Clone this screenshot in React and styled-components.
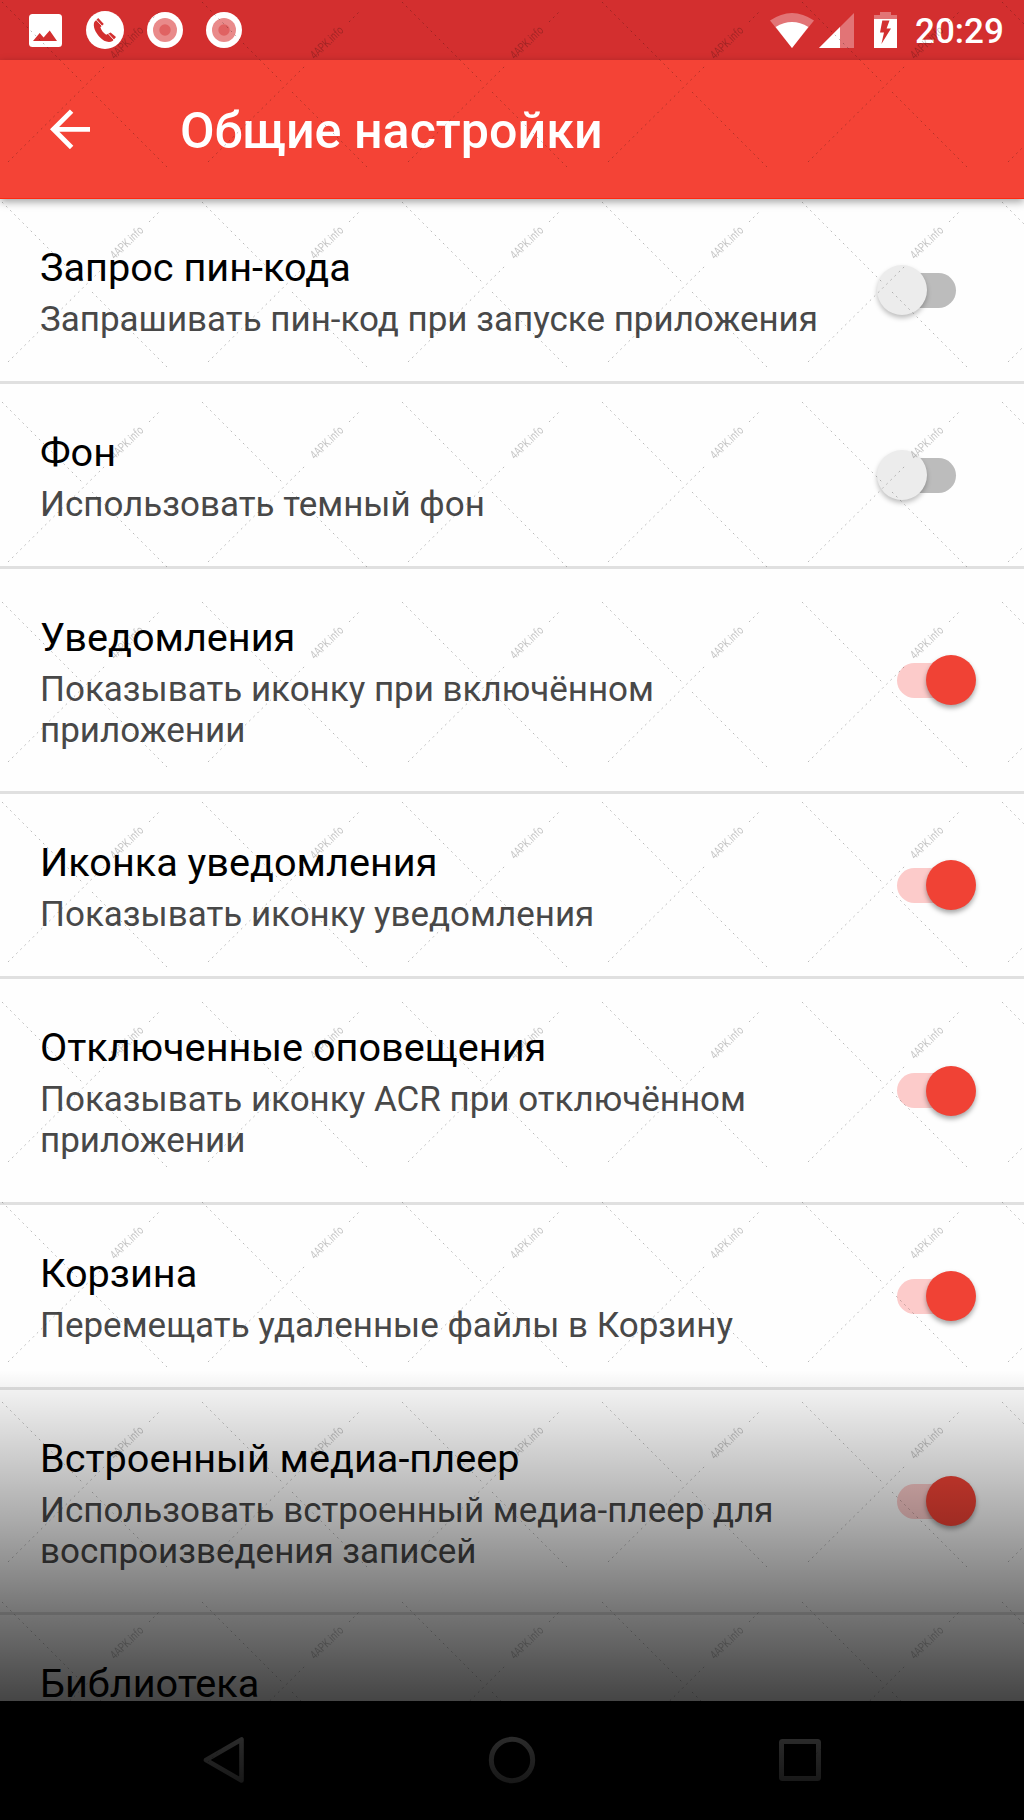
import React, { Component } from 'react'
import styled, { createGlobalStyle } from 'styled-components';

const items = [
    { title: 'Запрос пин-кода', text: 'Запрашивать пин-код при запуске приложения', on: false, height: 185 },
    { title: 'Фон', text: 'Использовать темный фон', on: false, height: 185 },
    { title: 'Уведомления', text: 'Показывать иконку при включённом приложении', on: true, height: 225 },
    { title: 'Иконка уведомления', text: 'Показывать иконку уведомления', on: true, height: 185 },
    { title: 'Отключенные оповещения', text: 'Показывать иконку ACR при отключённом приложении', on: true, height: 226 },
    { title: 'Корзина', text: 'Перемещать удаленные файлы в Корзину', on: true, height: 185 },
    { title: 'Встроенный медиа-плеер', text: 'Использовать встроенный медиа-плеер для воспроизведения записей', on: true, height: 225 },
    { title: 'Библиотека', on: null, height: 86 },
]

const PictureIcon = () => (
    <svg width="33" height="33" viewBox="0 0 33 33">
        <rect width="33" height="33" rx="3.5" fill="#fff" />
        <path d="M4 27 L10.7 19 L14.6 23.6 L20.7 16.6 L28 27 Z" fill="#d32f2f" />
    </svg>
)

const PhoneIcon = () => (
    <svg width="38" height="38" viewBox="0 0 38 38">
        <circle cx="19" cy="19" r="19" fill="#fff" />
        <path d="M8.3 11 L12.2 7 L17.8 13 L14.4 16.2 C15 19 17.6 22 20.2 23.8 L24.6 21.4 L30 26 L26.6 30 C22.6 32.2 17.6 30.4 13.6 26 C9.4 21.4 6.6 15.4 8.3 11 Z" fill="#d32f2f" />
        <path d="M10 8.6 L16.2 15.2 M22 22.4 L28 29" stroke="#fff" strokeWidth="0.9" />
    </svg>
)

const RecordIcon = () => (
    <svg width="36" height="36" viewBox="0 0 36 36">
        <circle cx="18" cy="18" r="18" fill="#fff" />
        <circle cx="18" cy="18" r="12" fill="#e98a8a" />
        <circle cx="18" cy="18" r="5.7" fill="#e06262" />
    </svg>
)

const WifiIcon = () => (
    <svg width="44" height="35" viewBox="0 0 44 35">
        <path d="M0 7.6 Q22 -7.6 44 7.6 L22 35 Z" fill="#e27476" />
        <path d="M5.6 14 Q22 4 38.4 14 L22 35 Z" fill="#fff" />
    </svg>
)

const SignalIcon = () => (
    <svg width="35" height="35" viewBox="0 0 35 35">
        <path d="M35 0 V35 H0 Z" fill="#e27476" />
        <path d="M21 14 V35 H0 Z" fill="#fff" />
    </svg>
)

const BatteryIcon = () => (
    <svg width="23" height="36" viewBox="0 0 23 36">
        <path d="M0 3 H6 V0 H17 V3 H23 V8 H0 Z" fill="#e27476" />
        <path d="M0 7 H23 V36 H0 Z" fill="#fff" />
        <path d="M8.3 8.5 H15.5 L12.6 16.5 H17 L7.4 32 L10 20.5 H6 Z" fill="#d32f2f" />
    </svg>
)

const BackArrow = () => (
    <svg width="40" height="40" viewBox="0 0 40 40" fill="none" stroke="#fff" strokeWidth="4.8">
        <path d="M3 20.3 H40 M21.6 2.1 L3.4 20.3 L21.6 38.5" />
    </svg>
)

const Watermark = () => (
    <Overlay width="1024" height="1820">
        <defs>
            <pattern id="mark" width="200" height="200" patternUnits="userSpaceOnUse">
                <g stroke="#000" strokeOpacity="0.26" strokeWidth="1" strokeDasharray="1.8 4">
                    <path d="M2 2 L82 82 M92 92 L167 167" />
                    <path d="M8 162 L105 66 M149 22 L161 10" />
                </g>
                <text
                    x="126.7" y="46.6" textAnchor="middle" transform="rotate(-44 126.7 42.5)"
                    textLength="41" lengthAdjust="spacingAndGlyphs"
                    fontFamily="Roboto, sans-serif" fontSize="12" fill="#000" fillOpacity="0.23"
                >4APK.info</text>
            </pattern>
        </defs>
        <rect width="1024" height="1820" fill="url(#mark)" />
    </Overlay>
)

class App extends Component {
    constructor(props) {
        super(props);
        this.state = {
            checked: items.map(item => item.on)
        }
    }
    toggle = (index) => {
        const checked = [...this.state.checked];
        checked[index] = !checked[index];
        this.setState({ checked })
    }
    render() {
        return (
            <Screen>
                <GlobalStyle />
                <StatusBar>
                    <Notifications>
                        <PictureIcon />
                        <PhoneIcon />
                        <RecordIcon />
                        <RecordIcon />
                    </Notifications>
                    <WifiIcon />
                    <SignalIcon />
                    <BatteryIcon />
                    <Clock>20:29</Clock>
                </StatusBar>
                <Toolbar>
                    <BackArrow />
                    <Heading>Общие настройки</Heading>
                </Toolbar>
                <List>
                    {items.map((item, i) => (
                        <Row key={item.title} $height={item.height}>
                            <Label>
                                <Title>{item.title}</Title>
                                {item.text && <Description>{item.text}</Description>}
                            </Label>
                            {item.on !== null &&
                                <Switch $on={this.state.checked[i]} onClick={() => this.toggle(i)}>
                                    <Thumb $on={this.state.checked[i]} />
                                </Switch>
                            }
                        </Row>
                    ))}
                </List>
                <NavBar>
                    <svg width="42" height="48" viewBox="0 0 42 48">
                        <path d="M3 24 L38.5 3.5 V44.5 Z" fill="none" stroke="#fff" strokeWidth="4.6" strokeLinejoin="round" />
                    </svg>
                    <svg width="48" height="48" viewBox="0 0 48 48">
                        <circle cx="24" cy="24" r="20.7" fill="none" stroke="#fff" strokeWidth="5" />
                    </svg>
                    <svg width="42" height="42" viewBox="0 0 42 42">
                        <rect x="2.5" y="2.5" width="37" height="37" rx="1" fill="none" stroke="#fff" strokeWidth="5" />
                    </svg>
                </NavBar>
                <Watermark />
                <Shade />
            </Screen>
        );
    }
}

const GlobalStyle = createGlobalStyle`
    body {
        margin: 0;
        font-family: Roboto, "Liberation Sans", sans-serif;
    }
    svg {
        display: block;
        flex-shrink: 0;
    }
`

const Screen = styled.div`
    position: relative;
    width: 1024px;
    height: 1820px;
    display: flex;
    flex-direction: column;
    overflow: hidden;
    background: #fefefe;
`

const StatusBar = styled.div`
    display: flex;
    align-items: center;
    height: 60px;
    box-sizing: border-box;
    padding: 0 20px 0 29px;
    background: #d32f2f;
    svg + svg {
        margin-left: 5px;
    }
    svg:nth-of-type(3) {
        margin-left: 20px;
    }
`

const Notifications = styled.div`
    display: flex;
    flex: 1;
    align-items: center;
    && svg {
        margin: 0 23px 0 0;
    }
    && svg:first-child {
        margin-right: 24px;
    }
`

const Clock = styled.div`
    width: 89px;
    margin-left: 18px;
    padding-top: 3px;
    color: #fff;
    font-size: 35px;
    line-height: 40px;
    font-weight: 500;
`

const Toolbar = styled.div`
    display: flex;
    align-items: center;
    height: 139px;
    box-sizing: border-box;
    padding: 0 50px;
    background: #f44336;
    border-bottom: 1px solid #ff2a0f;
    box-shadow: 0 3px 8px rgba(0, 0, 0, 0.36);
`

const Heading = styled.h1`
    margin: 0;
    padding: 4px 0 0 90px;
    color: #fff;
    font-size: 50.2px;
    line-height: 60px;
    font-weight: 500;
    white-space: nowrap;
`

const List = styled.div`
    flex: 1;
    min-height: 0;
`

const Row = styled.div`
    display: flex;
    align-items: center;
    height: ${props => props.$height}px;
    box-sizing: border-box;
    padding: 0 48px 0 40px;
    border-bottom: 3px solid #e0e0e0;
    &:last-child {
        border-bottom: none;
    }
`

const Label = styled.div`
    flex: 1;
    align-self: flex-start;
    padding-top: 46px;
    margin-right: 40px;
`

const Title = styled.div`
    color: #000;
    font-size: 39.65px;
    line-height: 46px;
    &:last-child {
        line-height: 40px;
        padding-top: 3px;
    }
`

const Description = styled.div`
    margin: 8px -20px 0 0;
    color: #484848;
    font-size: 34.98px;
    line-height: 41px;
`

const Switch = styled.div`
    display: flex;
    align-items: center;
    justify-content: ${props => props.$on ? 'flex-end' : 'flex-start'};
    width: 59px;
    height: 35px;
    margin: 0 20px;
    border-radius: 18px;
    background: ${props => props.$on ? '#fccbca' : '#bcbcbc'};
    cursor: pointer;
`

const Thumb = styled.div`
    flex-shrink: 0;
    width: 50px;
    height: 50px;
    margin: 0 -20px;
    border-radius: 50%;
    background: ${props => props.$on ? '#f04235' : '#ececec'};
    box-shadow: 0 3px 5px rgba(0, 0, 0, ${props => props.$on ? 0.35 : 0.25});
`

const NavBar = styled.div`
    display: flex;
    align-items: center;
    justify-content: space-between;
    height: 119px;
    box-sizing: border-box;
    padding: 0 203px 1px;
    background: #000;
`

const Overlay = styled.svg`
    position: absolute;
    top: 0;
    left: 0;
    pointer-events: none;
`

/* the screen fades to black towards its bottom edge */
const Shade = styled.div`
    position: absolute;
    left: 0;
    right: 0;
    bottom: 0;
    height: 450px;
    pointer-events: none;
    background: linear-gradient(
        rgba(0, 0, 0, 0) 0,
        rgba(0, 0, 0, 0.05) 20px,
        rgba(0, 0, 0, 0.33) 151px,
        rgba(0, 0, 0, 0.54) 242px,
        rgba(0, 0, 0, 0.725) 330px,
        rgba(0, 0, 0, 0.83) 367px,
        rgba(0, 0, 0, 0.91) 415px,
        rgba(0, 0, 0, 0.95) 450px
    );
`

export default App;
